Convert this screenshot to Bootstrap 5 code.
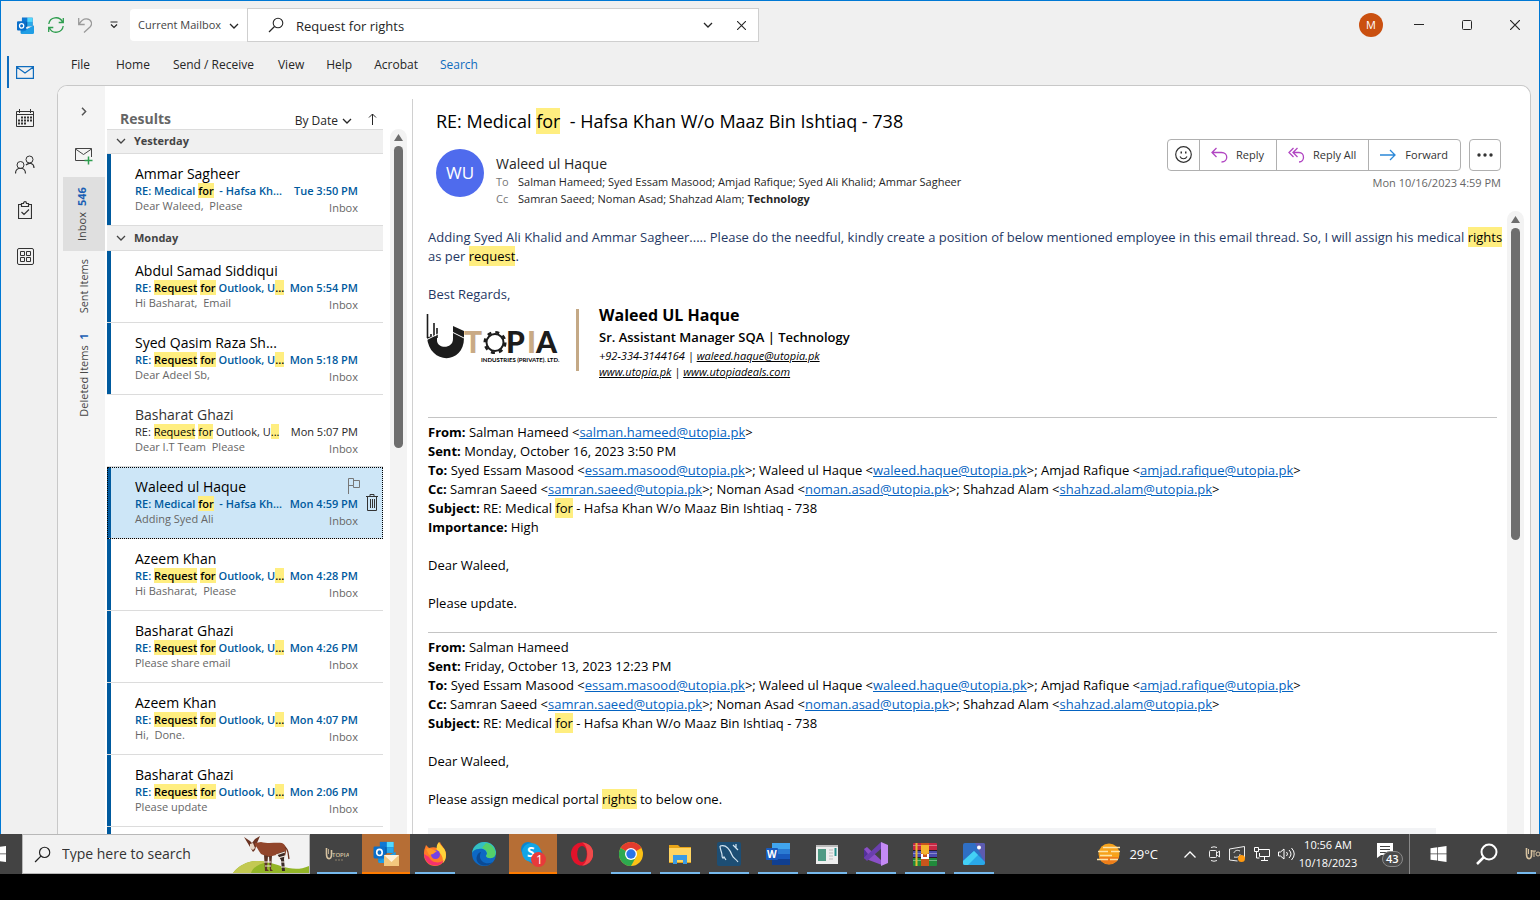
<!DOCTYPE html>
<html lang="en">
<head>
<meta charset="utf-8">
<meta name="viewport" content="width=device-width, initial-scale=1">
<title>Search results - Outlook</title>
<link href="https://cdn.jsdelivr.net/npm/bootstrap@5.3.0/dist/css/bootstrap.min.css" rel="stylesheet">
<style>
:root{--ui:"Open Sans","Noto Sans",sans-serif;--blue:#005a9e;--hit:#ffee80}
body{background:#000;font-family:var(--ui);font-size:12px;line-height:16px;color:#262626;height:100vh;overflow:hidden;padding-bottom:26px}
button,.linkbtn{background:none;border:0;padding:0;color:inherit;font:inherit;text-decoration:none}
svg{display:block;flex:none}
.ln{fill:none;stroke:currentColor;stroke-width:1}
.hit{background:var(--hit);color:#000;padding:1px 0}
.appwin{background:#f0f0f0;border:1px solid #0078d4;border-bottom:0;min-height:0}
/* title bar */
.titlebar{height:48px;padding-left:16px}
.quick{gap:14px;margin-right:12px}
.scope{width:117px;height:32px;border:0;border-radius:4px 0 0 4px;font-size:11px;color:#444;padding:0 0 0 8px;background:#fff;appearance:none}
.scopebox svg{position:absolute;right:8px;top:12px;pointer-events:none}
.searchbox{width:512px;height:34px;background:#fff;border:1px solid #cfcfcf}
.searchbox input{border:0;outline:0;font-size:13px;color:#262626;padding:1px 0 0;min-width:0}
.sysbtn{width:48px;height:48px}
.me{width:24px;height:24px;background:#ca5010;color:#fff;font-size:11px}
/* left rail */
.rail{width:56px}
.rail a{width:48px;height:46px;color:#333}
.rail .mark-on{width:2px;height:32px;background:#0f6cbd;left:6px;top:7px}
.menubar{height:38px;font-size:12px;padding:0 3px}
.menubar a{padding:0 11px}
.menubar .wide{padding:0 13px 0 12px}
.panel{background:#fff;border:1px solid #c8c8c8;border-bottom:0;border-radius:10px 10px 0 0;margin-right:8px;min-height:0}
/* folder strip */
.folders{width:47px;background:#f4f4f4;color:#444;padding-top:21px}
.folders a{writing-mode:vertical-rl;transform:rotate(180deg);font-size:11px;width:42px;align-self:flex-end}
.folders b{color:#1a5fb4;margin-top:6px}
.folders .cur{background:#dfdfdf;height:74px}
/* message list */
.results{width:276px;margin-left:2px}
.listhead{height:43px;padding:0 6px 0 13px}
.listhead h1{font-size:14px;line-height:20px;color:#666}
.group{height:25px;background:#f0f0f0;border-bottom:1px solid #dcdcdc;font-size:11px;font-weight:700;color:#444;padding-left:9px}
.group.first{border-top:1px solid #dcdcdc}
.msg{height:72px;border-bottom:1px solid #dcdcdc;padding:11px 25px 0 28px;color:#666;font-size:11px}
.msg .who{font-size:14px;line-height:18px;color:#333}
.msg .subj{line-height:15px;color:#262626;white-space:pre}
.msg .subj .hit{padding:0}
.msg .prev{line-height:15px}
.msg .box{padding-top:2px}
.unread{box-shadow:inset 4px 0 var(--blue)}
.unread .who{color:#000}
.unread .subj{color:var(--blue);font-weight:600}
.picked{background:#cde6f7;outline:1px dotted #000;outline-offset:-1px}
.picked .acts{right:5px;top:11px;width:30px;height:33px}
.scroller{width:17px;background:#f3f3f3;border-radius:9px 9px 0 0;padding-top:5px;color:#6e6e6e}
.scroller i{width:9px;border-radius:5px;background:#6e6e6e;margin-top:5px;flex:none}
.list-scroll{margin:43px 0 0 7px}
.list-scroll i{height:302px}
.mail-scroll{margin-right:6px}
.mail-scroll i{height:312px}
/* reading pane */
.reader{border-left:1px solid #d0d0d0;margin:13px 0 0 5px;min-width:0}
.mailhead{padding:8px 29px 4px 23px}
.mailhead h2{font-size:18px;line-height:28px;color:#000;white-space:pre-wrap}
.ava{width:48px;height:48px;background:#4f6bed;color:#fff;font-size:17px;margin-top:14px}
.sender{font-size:14px;line-height:18px}
.addr{font-size:11px;line-height:17px}
.addr dt{font-weight:400;color:#777;width:22px}
.actions .rbtn{height:32px;border:1px solid #b0b0b0;font-size:11px;padding:0 12px 0 11px;color:#333;gap:8px;margin-left:-1px}
.actions .rbtn:first-child{border-radius:4px 0 0 4px;padding:0 7px}
.actions .rbtn:last-child{border-radius:0 4px 4px 0}
.more{width:32px;height:32px;border:1px solid #b0b0b0;border-radius:4px}
.when{font-size:11px;color:#666}
.letter{font-size:13px;line-height:19px;color:#000;padding:17px 0 0 15px;min-width:0;overflow:hidden}
.letter p{margin:0 0 19px}
.letter .navy{color:#1f3864}
.letter a{color:#0563c1}
.letter hr{margin:0 10px 5px 0;border-color:#c4c4c4;opacity:1}
.sign{font-size:11px;line-height:16px;height:113px}
.sign h3{font-size:16px;line-height:22px;margin:0;font-weight:700}
.sign h4{font-size:13px;line-height:22px;margin:0;font-weight:600}
.sign a{color:#000}
.crest{margin:8px 0 0 -2px}
.rule-bar{width:3px;height:62px;background:#c4a986;margin:5px 20px 0 14px}
.sheet{height:40px;background:#f2f3f5;margin-right:71px}
/* taskbar */
.tasks{height:40px;background:#434343;color:#fff}
.start{width:22px;padding-right:16px}
.find{width:288px;height:40px;background:#f2f2f2;border:1px solid #b8b8b8;color:#222;padding-left:11px}
.find input{border:0;outline:0;background:none;font-size:14px;width:170px;padding:0 0 0 11px}
.find input::placeholder{color:#333;opacity:1}
.apps{gap:1px;padding-left:3px}
.app{width:48px;height:40px}
.app::after{content:"";position:absolute;left:4px;right:4px;bottom:0;height:2px;background:#76b9ed}
.app.off::after{display:none}
.app.alert-app{background:#b66e35}
.app.alert-app::after{left:0;right:0;background:#ff7b00}
.tray{font-size:12px}
.weather{font-size:13px;margin-right:26px}
.sys{gap:8px;margin-left:12px}
.clock{font-size:11px;line-height:18px;width:66px}
.note{width:48px}
.tray-sep{width:1px;height:40px;background:#888}
.second{gap:29px;padding-left:20px}
.edge-app{width:27px;margin-left:-14px}
</style>
</head>
<body class="d-flex flex-column">
<svg width="0" height="0" class="position-absolute" aria-hidden="true">
<symbol id="down" viewBox="0 0 10 10"><path d="M1 3l4 4 4-4" fill="none" stroke="currentColor" stroke-width="1.3"/></symbol>
<symbol id="x" viewBox="0 0 10 10"><path d="M0 0l10 10M10 0L0 10" fill="none" stroke="currentColor" stroke-width="1.2"/></symbol>
<symbol id="lens" viewBox="0 0 16 16"><circle cx="10" cy="6" r="4.800" fill="none" stroke="currentColor" stroke-width="1.1"/><path d="M6.500 9.500L1 15" stroke="currentColor" stroke-width="1.200"/></symbol>
<symbol id="olk" viewBox="0 0 24 24"><path d="M7 1h15v12H7z" fill="#1066b5"/><path d="M7 1h7.500v6H7z" fill="#0f78d4"/><path d="M14.500 1H22v6h-7.500z" fill="#50d9ff"/><path d="M7 7h7.500v7H7z" fill="#0a5ba6"/><path d="M14.500 7H22v6h-7.500z" fill="#28a8ea"/><path d="M5 12l9 5 10-5v10a2 2 0 0 1-2 2H7a2 2 0 0 1-2-2z" fill="#1490df"/><path d="M5 23l19-11v10a2 2 0 0 1-2 2H7z" fill="#28a8ea" opacity=".6"/><rect x="0" y="6" width="13" height="13" rx="1.500" fill="#0a6fca"/><ellipse cx="6.500" cy="12.500" rx="3" ry="3.300" fill="none" stroke="#fff" stroke-width="1.800"/></symbol>
<symbol id="win" viewBox="0 0 16 16"><path d="M0 2.200l6.800-.9v6.200H0zM7.500 1.200L16 0v7.500H7.500zM0 8.300h6.800v6.300L0 13.700zM7.500 8.300H16V16l-8.500-1.200z" fill="#fff"/></symbol>
</svg>

<div class="appwin d-flex flex-column flex-grow-1">
<header class="titlebar d-flex align-items-center">
  <div class="quick d-flex align-items-center">
  <svg width="17" height="17"><use href="#olk"/></svg>
  <button aria-label="Send and receive"><svg width="16" height="16" viewBox="0 0 16 16" fill="none" stroke="#2f9e4f" stroke-width="1.300"><path d="M.8 7A7.200 7.200 0 0 1 14.500 5M15.200 9A7.200 7.200 0 0 1 1.500 11M15.300 1v4.500h-4.600M.7 15v-4.500h4.600"/></svg></button>
  <button aria-label="Undo"><svg width="14" height="16" viewBox="0 0 14 16" fill="none" stroke="#9a9a9a" stroke-width="1.300"><path d="M.7 1v6.500h6M.9 7.300C3.500 3 6 1.600 8.500 1.800c5 .4 6.500 5.200 3.500 8.200L6 15.500"/></svg></button>
  <button class="ps-1" aria-label="Customize toolbar"><svg width="8" height="8" viewBox="0 0 8 8" class="ln"><path d="M.5 1h7M1 3.500l3 3 3-3" stroke-width="1.200"/></svg></button>
  </div>
  <div class="scopebox position-relative flex-shrink-0"><select class="scope" aria-label="Search scope"><option>Current Mailbox</option></select><svg width="10" height="10"><use href="#down"/></svg></div>
  <div class="searchbox d-flex align-items-center ps-3 pe-2">
    <svg class="ms-1" width="16" height="16"><use href="#lens"/></svg>
    <input class="flex-grow-1 ms-2 ps-1" aria-label="Search" value="Request for rights">
    <button class="me-3 pe-1" aria-label="More options"><svg width="10" height="10"><use href="#down"/></svg></button>
    <button class="mx-1" aria-label="Clear"><svg width="9" height="9"><use href="#x"/></svg></button>
  </div>
  <div class="ms-auto me rounded-circle d-flex align-items-center justify-content-center">M</div>
  <div class="d-flex ms-2 ps-1">
    <button class="sysbtn d-grid" aria-label="Minimize"><svg class="m-auto ln" width="10" height="10"><path d="M0 4.500h10"/></svg></button>
    <button class="sysbtn d-grid" aria-label="Maximize"><svg class="m-auto ln" width="10" height="10"><rect x=".5" y=".5" width="9" height="9" rx="1"/></svg></button>
    <button class="sysbtn d-grid" aria-label="Close"><svg class="m-auto" width="10" height="10"><use href="#x"/></svg></button>
  </div>
</header>

<div class="d-flex flex-grow-1" style="min-height:0">
<nav class="rail d-flex flex-column flex-shrink-0" aria-label="Apps">
  <a href="#" class="d-grid position-relative" aria-label="Mail"><span class="mark-on position-absolute"></span><svg class="m-auto" width="18" height="13" viewBox="0 0 18 13" fill="none" stroke="#0f6cbd" stroke-width="1.200"><path d="M.6.6h16.800v11.800H.6zM.6 1l8.400 6 8.400-6"/></svg></a>
  <a href="#" class="d-grid" aria-label="Calendar"><svg class="m-auto ln" width="18" height="18"><path d="M.5 2.500h17v15H.5zM.5 5.500h17M3.500 0v4M14.500 0v4"/><path d="M5 8.500h11M2 11.500h14M2 14.500h8" stroke-width="2" stroke-dasharray="2 1"/></svg></a>
  <a href="#" class="d-grid" aria-label="People"><svg class="m-auto ln" width="20" height="19"><circle cx="14.500" cy="4.500" r="3.500"/><circle cx="5.500" cy="10" r="3.500"/><path d="M.5 18.500c0-7 10-7 10 0M11 10c3-3 8-2 8 3" stroke-width="1.200"/></svg></a>
  <a href="#" class="d-grid" aria-label="Tasks"><svg class="m-auto ln" width="14" height="18"><path d="M3.500 3.500h-3v14h13v-14h-3M3.500 5.500v-3h2c0-2.500 3-2.500 3 0h2v3zM3.500 11l2.500 2.500L11 8.500" stroke-width="1.200"/></svg></a>
  <a href="#" class="d-grid" aria-label="More apps"><svg class="m-auto ln" width="17" height="17"><rect x=".5" y=".5" width="16" height="16" rx="1.500"/><path d="M3.500 3.500h4v4h-4zM9.500 3.500h4v4h-4zM3.500 9.500h4v4h-4zM9.500 9.500h4v4h-4z"/></svg></a>
</nav>
<div class="d-flex flex-column flex-grow-1" style="min-width:0">
<nav class="menubar d-flex align-items-start pt-2" aria-label="Ribbon">
  <a class="linkbtn me-1" href="#">File</a><a class="linkbtn" href="#">Home</a><a class="linkbtn wide" href="#">Send / Receive</a><a class="linkbtn" href="#">View</a><a class="linkbtn" href="#">Help</a><a class="linkbtn" href="#">Acrobat</a><a class="linkbtn" href="#" style="color:#0f6cbd">Search</a>
</nav>
<main class="panel d-flex flex-grow-1 overflow-hidden">
  <nav class="folders d-flex flex-column align-items-center flex-shrink-0" aria-label="Folders">
    <button class="ms-1 mb-4" aria-label="Expand"><svg width="6" height="9" viewBox="0 0 6 9"><path d="M1 .8l3.600 3.700L1 8.200" fill="none" stroke="#555" stroke-width="1.500"/></svg></button>
    <button class="ms-1 mb-2 py-1" aria-label="New mail"><svg class="mt-1" width="18" height="17"><path d="M10 12.500H.5V.500h16V9M.5 1l8 5.500 8-5.500" class="ln"/><path d="M13.500 8.500v8M9.500 12.500h8" stroke="#2f9e4f" stroke-width="1.500"/></svg></button>
    <a class="linkbtn cur d-flex align-items-center ps-2 pe-1 justify-content-center" href="#">Inbox<b>546</b></a>
    <a class="linkbtn d-flex align-items-center mt-2 pt-1" href="#">Sent Items</a>
    <a class="linkbtn d-flex align-items-center mt-3" href="#">Deleted Items<b>1</b></a>
  </nav>
  <section class="results flex-shrink-0">
    <div class="listhead d-flex align-items-end">
      <h1 class="fw-bold m-0">Results</h1>
      <button class="ms-auto d-flex align-items-center gap-1">By Date <svg width="10" height="10"><use href="#down"/></svg></button>
      <button class="ms-3 mb-1" aria-label="Sort order"><svg width="9" height="12" class="ln"><path d="M4.500 12V1M1 4.500l3.500-3.500L8 4.500"/></svg></button>
    </div>
    <div class="group first d-flex align-items-center gap-2"><svg width="10" height="10"><use href="#down"/></svg>Yesterday</div>
    <article class="msg unread"><div class="who">Ammar Sagheer</div><div class="subj d-flex justify-content-between"><span>RE: Medical <span class="hit">for</span>  - Hafsa Kh...</span><span>Tue 3:50 PM</span></div><div class="prev d-flex justify-content-between"><span>Dear Waleed,&nbsp; Please</span><span class="box">Inbox</span></div></article>
    <div class="group d-flex align-items-center gap-2"><svg width="10" height="10"><use href="#down"/></svg>Monday</div>
    <article class="msg unread"><div class="who">Abdul Samad Siddiqui</div><div class="subj d-flex justify-content-between"><span>RE: <span class="hit">Request</span> <span class="hit">for</span> Outlook, U<span class="hit">...</span></span><span>Mon 5:54 PM</span></div><div class="prev d-flex justify-content-between"><span>Hi Basharat,&nbsp; Email</span><span class="box">Inbox</span></div></article>
    <article class="msg unread"><div class="who">Syed Qasim Raza Sh...</div><div class="subj d-flex justify-content-between"><span>RE: <span class="hit">Request</span> <span class="hit">for</span> Outlook, U<span class="hit">...</span></span><span>Mon 5:18 PM</span></div><div class="prev d-flex justify-content-between"><span>Dear Adeel Sb,</span><span class="box">Inbox</span></div></article>
    <article class="msg"><div class="who">Basharat Ghazi</div><div class="subj d-flex justify-content-between"><span>RE: <span class="hit">Request</span> <span class="hit">for</span> Outlook, U<span class="hit">...</span></span><span>Mon 5:07 PM</span></div><div class="prev d-flex justify-content-between"><span>Dear I.T Team&nbsp; Please</span><span class="box">Inbox</span></div></article>
    <article class="msg unread picked position-relative"><div class="who">Waleed ul Haque</div><div class="subj d-flex justify-content-between"><span>RE: Medical <span class="hit">for</span>  - Hafsa Kh...</span><span>Mon 4:59 PM</span></div><div class="prev d-flex justify-content-between"><span>Adding Syed Ali</span><span class="box">Inbox</span></div>
      <div class="acts position-absolute d-flex justify-content-between"><button class="align-self-start" aria-label="Flag"><svg width="12" height="16" style="color:#777"><path d="M.5 16V.5h5v7h-5M5.500 2.500h6v7h-6v-2" class="ln"/></svg></button><button class="align-self-end" aria-label="Delete"><svg width="12" height="17" style="color:#333"><path d="M0 2.500h12M4 2.500v-2h4v2M1.500 2.500v14h9v-14M4.500 5v9M6.500 5v9M8.500 5v9" class="ln"/></svg></button></div></article>
    <article class="msg unread"><div class="who">Azeem Khan</div><div class="subj d-flex justify-content-between"><span>RE: <span class="hit">Request</span> <span class="hit">for</span> Outlook, U<span class="hit">...</span></span><span>Mon 4:28 PM</span></div><div class="prev d-flex justify-content-between"><span>Hi Basharat,&nbsp; Please</span><span class="box">Inbox</span></div></article>
    <article class="msg unread"><div class="who">Basharat Ghazi</div><div class="subj d-flex justify-content-between"><span>RE: <span class="hit">Request</span> <span class="hit">for</span> Outlook, U<span class="hit">...</span></span><span>Mon 4:26 PM</span></div><div class="prev d-flex justify-content-between"><span>Please share email</span><span class="box">Inbox</span></div></article>
    <article class="msg unread"><div class="who">Azeem Khan</div><div class="subj d-flex justify-content-between"><span>RE: <span class="hit">Request</span> <span class="hit">for</span> Outlook, U<span class="hit">...</span></span><span>Mon 4:07 PM</span></div><div class="prev d-flex justify-content-between"><span>Hi,&nbsp; Done.</span><span class="box">Inbox</span></div></article>
    <article class="msg unread"><div class="who">Basharat Ghazi</div><div class="subj d-flex justify-content-between"><span>RE: <span class="hit">Request</span> <span class="hit">for</span> Outlook, U<span class="hit">...</span></span><span>Mon 2:06 PM</span></div><div class="prev d-flex justify-content-between"><span>Please update</span><span class="box">Inbox</span></div></article>
    <article class="msg unread"></article>
  </section>
  <div class="scroller list-scroll d-flex flex-column align-items-center flex-shrink-0"><svg width="9" height="7"><path d="M4.500 0L9 7H0z" fill="currentColor"/></svg><i></i></div>

  <section class="reader flex-grow-1 d-flex flex-column">
    <div class="mailhead">
      <h2 class="m-0 fw-normal">RE: Medical <span class="hit">for</span>  - Hafsa Khan W/o Maaz Bin Ishtiaq - 738</h2>
      <div class="d-flex">
        <div class="ava rounded-circle d-flex align-items-center justify-content-center flex-shrink-0">WU</div>
        <div class="ms-2 ps-1 pt-3 mt-1">
          <div class="sender">Waleed ul Haque</div>
          <dl class="addr m-0"><div class="d-flex"><dt>To</dt><dd class="m-0">Salman Hameed; Syed Essam Masood; Amjad Rafique; Syed Ali Khalid; Ammar Sagheer</dd></div><div class="d-flex"><dt>Cc</dt><dd class="m-0">Samran Saeed; Noman Asad; Shahzad Alam; <b>Technology</b></dd></div></dl>
        </div>
        <div class="ms-auto text-end flex-shrink-0 pt-1">
          <div class="d-flex gap-2">
            <div class="actions d-flex">
              <button class="rbtn" aria-label="React"><svg width="17" height="17" class="ln"><circle cx="8.500" cy="8.500" r="7.800" stroke-width="1.200"/><path d="M5 10.500c1.500 3 5.500 3 7 0" stroke-width="1.200"/><path d="M5.500 6.500h1.500M10 6.500h1.500" stroke-width="1.800"/></svg></button>
              <button class="rbtn d-flex align-items-center"><svg width="17" height="16" fill="none" stroke="#b146c2" stroke-width="1.300"><path d="M5.500 1L1 5.500 5.500 10M1 5.500h9.500c7 0 7 9.500 0 9.500"/></svg>Reply</button>
              <button class="rbtn d-flex align-items-center"><svg width="17" height="16" fill="none" stroke="#b146c2" stroke-width="1.300"><path d="M5.500 1L1 5.500 5.500 10M9.500 1L5 5.500 9.500 10M5 5.500h6c6 0 6 9.500 0 9.500"/></svg>Reply All</button>
              <button class="rbtn d-flex align-items-center"><svg width="17" height="12" fill="none" stroke="#2b88d8" stroke-width="1.300"><path d="M0 6h15M10 1l5 5-5 5"/></svg>Forward</button>
            </div>
            <button class="more d-grid" aria-label="More actions"><svg class="m-auto" width="16" height="4" fill="#333"><circle cx="2" cy="2" r="1.700"/><circle cx="8" cy="2" r="1.700"/><circle cx="14" cy="2" r="1.700"/></svg></button>
          </div>
          <div class="when pt-1">Mon 10/16/2023 4:59 PM</div>
        </div>
      </div>
    </div>
    <div class="d-flex flex-grow-1" style="min-height:0">
    <article class="letter flex-grow-1">
      <p class="navy">Adding Syed Ali Khalid and Ammar Sagheer..... Please do the needful, kindly create a position of below mentioned employee in this email thread. So, I will assign his medical <span class="hit">rights</span><br>as per <span class="hit">request</span>.</p>
      <p class="navy m-0">Best Regards,</p>
      <div class="sign d-flex">
        <svg class="crest" width="136" height="54" viewBox="0 0 136 54"><path d="M1 25c2 28 37 28 37 1v-7l-11-5v13c0 10-15 10-16 2V24z" fill="#1c1c1c"/><path d="M1.500 2v24M5 22v6M8 11v16M11 16v10" stroke="#1c1c1c" stroke-width="1.600"/><path d="M26 20l12 6M0 28l12-6" stroke="#fff"/><g font-family="Lato,sans-serif" font-weight="900" font-size="30" fill="#1c1c1c"><text x="38" y="41" fill="#c9aa85">T</text><text x="80" y="41">P</text><text x="101" y="41" fill="#c9aa85">I</text><text x="110" y="41">A</text></g><circle cx="69" cy="30.500" r="8.500" fill="none" stroke="#1c1c1c" stroke-width="2"/><circle cx="69" cy="30.500" r="10.300" fill="none" stroke="#1c1c1c" stroke-width="2.500" stroke-dasharray="4 4.090"/><text x="55" y="50" font-family="Lato,sans-serif" font-weight="700" font-size="6">INDUSTRIES (PRIVATE). LTD.</text></svg>
        <div class="rule-bar"></div>
        <div><h3>Waleed UL Haque</h3><h4>Sr. Assistant Manager SQA | Technology</h4><i>+92-334-3144164 | <a href="#">waleed.haque@utopia.pk</a><br><a href="#">www.utopia.pk</a> | <a href="#">www.utopiadeals.com</a></i></div>
      </div>
      <hr>
      <p><b>From:</b> Salman Hameed &lt;<a href="#">salman.hameed@utopia.pk</a>&gt;<br><b>Sent:</b> Monday, October 16, 2023 3:50 PM<br><b>To:</b> Syed Essam Masood &lt;<a href="#">essam.masood@utopia.pk</a>&gt;; Waleed ul Haque &lt;<a href="#">waleed.haque@utopia.pk</a>&gt;; Amjad Rafique &lt;<a href="#">amjad.rafique@utopia.pk</a>&gt;<br><b>Cc:</b> Samran Saeed &lt;<a href="#">samran.saeed@utopia.pk</a>&gt;; Noman Asad &lt;<a href="#">noman.asad@utopia.pk</a>&gt;; Shahzad Alam &lt;<a href="#">shahzad.alam@utopia.pk</a>&gt;<br><b>Subject:</b> RE: Medical <span class="hit">for</span> - Hafsa Khan W/o Maaz Bin Ishtiaq - 738<br><b>Importance:</b> High</p>
      <p>Dear Waleed,</p>
      <p>Please update.</p>
      <hr>
      <p><b>From:</b> Salman Hameed<br><b>Sent:</b> Friday, October 13, 2023 12:23 PM<br><b>To:</b> Syed Essam Masood &lt;<a href="#">essam.masood@utopia.pk</a>&gt;; Waleed ul Haque &lt;<a href="#">waleed.haque@utopia.pk</a>&gt;; Amjad Rafique &lt;<a href="#">amjad.rafique@utopia.pk</a>&gt;<br><b>Cc:</b> Samran Saeed &lt;<a href="#">samran.saeed@utopia.pk</a>&gt;; Noman Asad &lt;<a href="#">noman.asad@utopia.pk</a>&gt;; Shahzad Alam &lt;<a href="#">shahzad.alam@utopia.pk</a>&gt;<br><b>Subject:</b> RE: Medical <span class="hit">for</span> - Hafsa Khan W/o Maaz Bin Ishtiaq - 738</p>
      <p>Dear Waleed,</p>
      <p>Please assign medical portal <span class="hit">rights</span> to below one.</p>
      <div class="sheet"></div>
    </article>
    <div class="scroller mail-scroll d-flex flex-column align-items-center flex-shrink-0"><svg width="9" height="7"><path d="M4.500 0L9 7H0z" fill="currentColor"/></svg><i></i></div>
    </div>
  </section>
</main>
</div>
</div>
</div>

<footer class="tasks d-flex align-items-center flex-shrink-0 overflow-hidden">
  <button aria-label="Start" class="start d-flex overflow-hidden justify-content-end"><svg width="16" height="16"><use href="#win"/></svg></button>
  <div class="find d-flex align-items-center"><svg width="17" height="17"><use href="#lens"/></svg><input placeholder="Type here to search" aria-label="Type here to search">
    <svg class="ms-auto" width="76" height="38" viewBox="0 0 76 38"><path d="M0 38C8 28 20 24 34 27s26 11 42 4v7z" fill="#93b527"/><path d="M0 38C8 28 20 24 34 27c-8 2-14 5-16 11z" fill="#c3c952"/><path d="M11 2l6 4 2 2 3-4 5-3-3 7-2 7-2 2-3-5z" fill="#6b3423"/><path d="M17 9l3-1 2 5-2 2-3-2z" fill="#e8d8c8"/><path d="M22 8l6-1c8 2 15 0 21 1 5 2 5 8 3 13l-5-2-12 3-7-3c-3-4-4-7-6-9z" fill="#91452b"/><path d="M31 20l4 1-1 13 2 2h-4zM36 21l3 0-1 13 2 2h-3z" fill="#5c3426"/><path d="M44 19l8-3-1 8 1 12h-3l-1-11z" fill="#3a2a26"/><path d="M43 20l9-3M45 23l7-2M48 27h4M31 27h7M32 31h6M48 32h4" stroke="#f3e9df" stroke-width="1.200"/><path d="M52 12c4 3 3 8 4 12" fill="none" stroke="#6b3423" stroke-width="1.300"/></svg></div>
  <div class="apps d-flex">
  <button class="app d-grid position-relative" aria-label="Utopia"><svg class="m-auto" width="24" height="16"><path d="M1.500 2v6c0 6 5 6 5 1V4" fill="none" stroke="#d8c3a0" stroke-width="1.600"/><path d="M3.500 3v5" stroke="#d8c3a0" stroke-width=".8"/><text x="7" y="11" font-size="6" font-weight="600" fill="#d8c3a0">TOPIA</text><path d="M10 14h9" stroke="#8f846f" stroke-dasharray="2 1"/></svg></button>
  <button class="app alert-app d-grid position-relative" aria-label="Outlook"><svg class="m-auto" width="26" height="26" viewBox="0 0 26 26"><svg width="23" height="22"><use href="#olk"/></svg><path d="M11 14h15v11H11z" fill="#f3c77d"/><path d="M11 14l7.500 7 7.500-7z" fill="#fff2d8"/></svg></button>
  <button class="app d-grid position-relative" aria-label="Firefox"><svg class="m-auto" width="24" height="24"><path d="M2 6l1-3 3 3c3-1 6-1 8 0 0-3 1-5 3-6 1 4 6 6 6 13a11 11 0 0 1-22 0c0-3 0-5 1-7z" fill="#ff7a28"/><path d="M16 0c1 4 7 6 7 13 0 3-1 6-3 8 0-6-1-9-6-12-1-4 0-7 2-9z" fill="#ffd23a"/><path d="M1 12c1 13 16 15 20 6-4 4-13 3-15-3z" fill="#f5316e"/><circle cx="12.500" cy="12.500" r="4.500" fill="#7542e5"/><path d="M3 7c3-1 6 0 8 1l3 1-4 3-4 1z" fill="#ff9a26"/></svg></button>
  <button class="app off d-grid position-relative" aria-label="Edge"><svg class="m-auto" width="24" height="24"><circle cx="12" cy="12" r="12" fill="#0d68c4"/><path d="M0 11C2-3 22-4 24 10c0 6-8 7-10 4 3-4-2-8-7-7-4 0-6 2-7 4z" fill="#35c1c0"/><path d="M14 1c7 1 11 9 9 13-2 3-8 3-9 0 3-4-1-7-4-8z" fill="#54d06a"/><path d="M9 10c-4 8 4 14 12 10-8 8-19 1-16-6 1-3 3-4 4-4z" fill="#0b4a94"/></svg></button>
  <button class="app alert-app d-grid position-relative" aria-label="Skype"><svg class="m-auto" width="26" height="26"><circle cx="8" cy="8" r="7" fill="#0a86d0"/><circle cx="15" cy="15" r="8" fill="#0a86d0"/><circle cx="11.500" cy="11.500" r="9.500" fill="#12a5e8"/><text x="7" y="16" font-size="14" font-weight="700" fill="#fff">S</text><circle cx="18.500" cy="18.500" r="7.500" fill="#e83a3a"/><text x="16" y="23" font-size="12" fill="#fff">1</text></svg></button>
  <button class="app off d-grid position-relative" aria-label="Opera"><svg class="m-auto" width="22" height="24"><ellipse cx="11" cy="12" rx="11" ry="11.500" fill="#e3122a"/><path d="M11 .5c16 1 14 22 0 23 7-3 7-20 0-23z" fill="#ef4a4a"/><ellipse cx="11" cy="12" rx="4.800" ry="8" fill="#434343"/></svg></button>
  <button class="app d-grid position-relative" aria-label="Chrome"><svg class="m-auto" width="24" height="24"><circle cx="12" cy="12" r="12" fill="#fbc116"/><path d="M12 12L1.600 6A12 12 0 0 1 22.400 6z" fill="#e33b2e"/><path d="M12 12L1.600 6A12 12 0 0 0 12 24l5-9z" fill="#2da94f"/><circle cx="12" cy="12" r="6" fill="#fff"/><circle cx="12" cy="12" r="4.700" fill="#2a74e8"/></svg></button>
  <button class="app d-grid position-relative" aria-label="File Explorer"><svg class="m-auto" width="22" height="20"><path d="M0 1h9l2 2h11v16H0z" fill="#e8a417"/><path d="M0 4h22v14H0z" fill="#ffd562"/><path d="M4 20v-9h14v9h-4v-4H8v4z" fill="#3a9be4"/></svg></button>
  <button class="app d-grid position-relative" aria-label="MySQL Workbench"><svg class="m-auto" width="24" height="24"><rect width="24" height="24" rx="2" fill="#1d4e74"/><path d="M3 4c6-2 10 4 12 9 1 3 4 4 6 7M3 4c0 4 2 6 2 9s1 4 2 2l2 3M16 3l5 5M19 2v4" fill="none" stroke="#d5e6f2" stroke-width="1.200"/></svg></button>
  <button class="app d-grid position-relative" aria-label="Word"><svg class="m-auto" width="24" height="22"><path d="M6 0h18v6H6z" fill="#41a5ee"/><path d="M6 6h18v5H6z" fill="#2b7cd3"/><path d="M6 11h18v5H6z" fill="#185abd"/><path d="M6 16h18v6H6z" fill="#103f91"/><rect y="5" width="12" height="12" rx="1" fill="#185abd"/><text x="1" y="15" font-size="10" font-weight="700" fill="#fff">W</text></svg></button>
  <button class="app d-grid position-relative" aria-label="Report viewer"><svg class="m-auto" width="22" height="19"><path d="M0 0h22v19H0z" fill="#eee"/><path d="M0 0h22v2H0z" fill="#bbb"/><path d="M2 4h8v12H2z" fill="#4f9a84"/><path d="M13 5h4M13 8h4M13 11h4M13 14h4" stroke="#bbb"/><path d="M19.500 3v8" stroke="#26908c" stroke-width="2"/></svg></button>
  <button class="app d-grid position-relative" aria-label="Visual Studio"><svg class="m-auto" width="24" height="24"><path d="M0 7l3-2 15 14v4L2 17l-2-1z" fill="#8b50c8"/><path d="M0 16L17 0l1 6L3 19z" fill="#6a3fae"/><path d="M17 0l7 3v18l-7 3z" fill="#c58af5"/><path d="M0 7v9l4-4z" fill="#52309a"/></svg></button>
  <button class="app d-grid position-relative" aria-label="WinRAR"><svg class="m-auto" width="24" height="23"><rect width="24" height="8" rx="1" fill="#c52843"/><rect y="8" width="24" height="7" rx="1" fill="#4a4bb0"/><rect y="15" width="24" height="8" rx="1" fill="#218a3b"/><path d="M0 2.500h24M0 10.500h24M0 17.500h24" stroke="#fff" opacity=".35"/><path d="M0 7.500h24M0 14.500h24" stroke="#2a1a2a"/><path d="M3.500 0v23" stroke="#e8b830" stroke-width="2"/><path d="M8 0h8v23H8z" fill="#c9551c"/><path d="M8 2h8v8l-4 2-4-2z" fill="#f4b52d"/><path d="M9 11v4h6v-4" fill="none" stroke="#fff" stroke-width="2"/></svg></button>
  <button class="app d-grid position-relative" aria-label="Photos"><svg class="m-auto" width="22" height="22"><rect width="22" height="22" rx="2" fill="#2f6fc4"/><path d="M12 0h8a2 2 0 0 1 2 2v18z" fill="#5d5bb0"/><path d="M0 18l11-10 11 11v1a2 2 0 0 1-2 2H2a2 2 0 0 1-2-2z" fill="#2aa8e8"/><path d="M0 18l11-10 4 4L5 22H2a2 2 0 0 1-2-2z" fill="#43d0f5"/><circle cx="16" cy="4.500" r="2" fill="#fff"/></svg></button>
  </div>

  <div class="tray ms-auto d-flex align-items-center h-100">
    <button class="weather d-flex align-items-center gap-2"><svg width="24" height="22"><circle cx="12" cy="11" r="10.500" fill="#f6a21b"/><path d="M2 14a10.500 10.500 0 0 0 20 0z" fill="#ee7d1a"/><path d="M6 4.500h17M1 8.500h10M14 8.500h9M3 12.500h12M0 16.500h11M13 16.500h8" stroke="#fde3a8" stroke-width="1.500"/></svg>29°C</button>
    <button aria-label="Hidden icons"><svg width="12" height="7"><path d="M.5 6.500L6 1l5.500 5.500" fill="none" stroke="#fff" stroke-width="1.300"/></svg></button>
    <div class="sys d-flex align-items-center">
    <svg width="13" height="16" fill="none" stroke="#eee"><rect x="1.500" y="4.500" width="7" height="7" rx="1"/><path d="M9 7l2.500-2v6L9 9M3 1.500q3-1.500 6 0M3 14.500q3 1.500 6 0"/></svg>
    <svg width="17" height="16" fill="none" stroke="#eee"><path d="M.5 3l15-2.500V12M.5 3v11l8 1M11 5c-4-2-6 1-6 2M5 11c4 1 6-1 6-3"/><circle cx="12.500" cy="12.500" r="3.500" fill="#ff9a10" stroke="none"/></svg>
    <svg width="16" height="14" fill="none" stroke="#fff"><path d="M5 2.500h10.500v7H5.500V6M7 13.500h7M10.500 10v3M.5.500h4v4h-4zM2.500 5v6h3"/></svg>
    <svg width="17" height="14" fill="none" stroke="#fff"><path d="M.5 5v4h2L6 12V2L2.500 5zM8.500 5q2 2 0 4M11 3q4 4 0 8M13.500 1q5.500 6 0 12"/></svg>
    </div>
    <div class="clock text-center">10:56 AM<br>10/18/2023</div>
    <button class="note d-flex h-100 align-items-center" aria-label="Notifications"><svg class="ms-3" width="28" height="26"><path d="M0 2h16v12H4l-4 3z" fill="#fff"/><path d="M3 5.500h10M3 8.500h10M3 11.500h7" stroke="#434343"/><rect x="5.500" y="10.500" width="20" height="15" rx="7.500" fill="#4a4a4a" stroke="#8a8a8a"/><text x="9" y="22" font-size="11" font-weight="600" fill="#fff">43</text></svg></button>
    <div class="tray-sep"></div>
    <div class="second d-flex align-items-center">
    <svg width="17" height="16"><use href="#win"/></svg>
    <svg width="22" height="22" viewBox="0 0 22 22"><circle cx="13" cy="9" r="7.500" fill="none" stroke="#fff" stroke-width="2"/><path d="M7.500 14.500L1 21" stroke="#fff" stroke-width="2.500"/></svg>
    <div class="edge-app overflow-hidden position-relative app d-flex align-items-center ps-2"><svg class="ms-1" width="15" height="16"><path d="M1.500 2v6c0 6 5 6 5 1V4" fill="none" stroke="#d8c3a0" stroke-width="1.600"/><path d="M3.500 3v5M7 5h4M9 5v6" stroke="#d8c3a0"/><circle cx="13" cy="8" r="2" fill="none" stroke="#d8c3a0"/></svg></div>
    </div>
  </div>
</footer>
<script src="https://cdn.jsdelivr.net/npm/bootstrap@5.3.0/dist/js/bootstrap.bundle.min.js"></script>
</body>
</html>
